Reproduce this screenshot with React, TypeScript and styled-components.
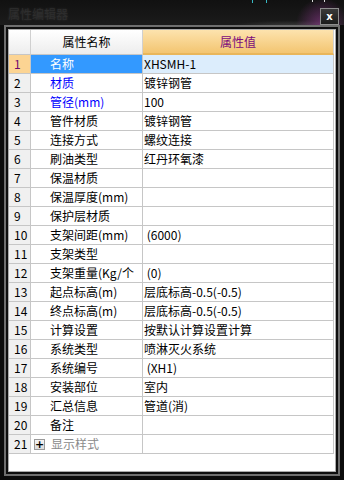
import React from "react";
import styled, { createGlobalStyle } from "styled-components";

const GlobalStyle = createGlobalStyle`
  html, body {
    margin: 0;
    padding: 0;
    background: #000;
  }
  body {
    font-family: "Noto Sans CJK SC", "Noto Sans", sans-serif;
    font-size: 12px;
  }
`;

const FONT = `"Noto Sans CJK SC", "Noto Sans", sans-serif`;
const GRID = "#c6c6c6";

const Window = styled.div`
  width: 344px;
  height: 480px;
  display: flex;
  flex-direction: column;
  background: #0c0c0c;
  box-sizing: border-box;
  overflow: hidden;
`;

const TitleBar = styled.div`
  height: 25px;
  flex: none;
  display: flex;
  justify-content: space-between;
  padding: 0 5px 0 8px;
  box-sizing: border-box;
  background:
    linear-gradient(#37b9c4, #37b9c4) 252px 0 / 1px 3px no-repeat,
    linear-gradient(#37b9c4, #37b9c4) 266px 0 / 1px 3px no-repeat,
    linear-gradient(#d8d8d8, #d8d8d8) 312px 0 / 1px 2px no-repeat,
    linear-gradient(#d8d8d8, #d8d8d8) 324px 0 / 1px 2px no-repeat,
    radial-gradient(circle at 322px 24px, rgba(190, 70, 190, 0.45), rgba(190, 70, 190, 0) 26px),
    radial-gradient(ellipse at 290px 26px, rgba(120, 120, 120, 0.35), rgba(0, 0, 0, 0) 60px),
    linear-gradient(#111, #1b1b1b);
`;

const Title = styled.span`
  align-self: center;
  margin-top: 1px;
  font-family: ${FONT};
  font-size: 12px;
  color: #2e2e2e;
  text-shadow: 0 0 3px rgba(255, 255, 255, 0.12);
`;

const CloseButton = styled.div`
  margin-top: 8px;
  width: 19px;
  height: 17px;
  box-sizing: border-box;
  border: 1px solid #8e8e8e;
  background: linear-gradient(#3a3a3a, #1c1c1c);
  display: flex;
  align-items: center;
  justify-content: center;
  color: #fff;
  font-family: "DejaVu Sans", sans-serif;
  font-weight: bold;
  font-size: 10px;
  line-height: 1;
`;

const Frame = styled.div`
  flex: 1;
  display: flex;
  margin: 0 4px 4px;
  border: 2px solid #6f6f6f;
  padding: 2px;
  background: #0e0e0e;
`;

const Client = styled.div`
  flex: 1;
  border: 1px solid #aaaaaa;
  background: #fff;
  overflow: hidden;
`;

const Table = styled.div`
  width: 325px;
  display: flex;
  flex-direction: column;
  font-family: ${FONT};
  font-size: 12px;
`;

const Row = styled.div<{ $head?: boolean }>`
  display: grid;
  grid-template-columns: 22px 112px 191px;
  height: ${(p) => (p.$head ? 25 : 19)}px;
`;

const Cell = styled.div`
  box-sizing: border-box;
  border-right: 1px solid ${GRID};
  border-bottom: 1px solid ${GRID};
  white-space: nowrap;
  overflow: hidden;
  display: flex;
  align-items: center;
  line-height: 18px;
`;

const HeadCell = styled(Cell)<{ $tone: "corner" | "name" | "value" }>`
  justify-content: center;
  border-right-color: #d0d0d0;
  color: ${(p) => (p.$tone === "value" ? "#7c0c7c" : "#000")};
  background: ${(p) =>
    p.$tone === "value"
      ? "linear-gradient(#fde3ae, #f3c571)"
      : "linear-gradient(#ffffff, #ededed)"};
  border-bottom: ${(p) => (p.$tone === "value" ? "2px solid #e9b65a" : `1px solid ${GRID}`)};
`;

const NumCell = styled(Cell)<{ $active?: boolean }>`
  padding-left: 5px;
  background: ${(p) => (p.$active ? "#fcd493" : "#f0f0f0")};
  color: ${(p) => (p.$active ? "#6e0a6e" : "#000")};
`;

const NameCell = styled(Cell)<{ $active?: boolean; $tone?: "blue" | "gray" }>`
  padding-left: ${(p) => (p.$tone === "gray" ? 3 : 19)}px;
  gap: 6px;
  background: ${(p) => (p.$active ? "#3399ff" : "#fff")};
  color: ${(p) =>
    p.$active ? "#fff" : p.$tone === "blue" ? "#0000ff" : p.$tone === "gray" ? "#8a8a8a" : "#000"};
`;

const ValueCell = styled(Cell)<{ $active?: boolean }>`
  padding-left: 1px;
  background: ${(p) => (p.$active ? "#dcedfc" : "#fff")};
  color: #000;
`;

const Expander = styled.span`
  width: 11px;
  height: 11px;
  box-sizing: border-box;
  border: 1px solid #9a9a9a;
  background: linear-gradient(#f4f4f4, #dcdcdc);
  display: flex;
  align-items: center;
  justify-content: center;
  color: #000;
  font-family: "DejaVu Sans", sans-serif;
  font-size: 11px;
  line-height: 1;
  font-weight: bold;
`;

type Prop = {
  name: string;
  value: string;
  tone?: "blue" | "gray";
  group?: boolean;
};

const props: Prop[] = [
  { name: "名称", value: "XHSMH-1" },
  { name: "材质", value: "镀锌钢管", tone: "blue" },
  { name: "管径(mm)", value: "100", tone: "blue" },
  { name: "管件材质", value: "镀锌钢管" },
  { name: "连接方式", value: "螺纹连接" },
  { name: "刷油类型", value: "红丹环氧漆" },
  { name: "保温材质", value: "" },
  { name: "保温厚度(mm)", value: "" },
  { name: "保护层材质", value: "" },
  { name: "支架间距(mm)", value: "\u00a0(6000)" },
  { name: "支架类型", value: "" },
  { name: "支架重量(Kg/个", value: "\u00a0(0)" },
  { name: "起点标高(m)", value: "层底标高-0.5(-0.5)" },
  { name: "终点标高(m)", value: "层底标高-0.5(-0.5)" },
  { name: "计算设置", value: "按默认计算设置计算" },
  { name: "系统类型", value: "喷淋灭火系统" },
  { name: "系统编号", value: "\u00a0(XH1)" },
  { name: "安装部位", value: "室内" },
  { name: "汇总信息", value: "管道(消)" },
  { name: "备注", value: "" },
  { name: "显示样式", value: "", tone: "gray", group: true },
];

export default function App() {
  return (
    <>
      <GlobalStyle />
      <Window>
        <TitleBar>
          <Title>属性编辑器</Title>
          <CloseButton>x</CloseButton>
        </TitleBar>
        <Frame>
          <Client>
            <Table>
              <Row $head>
                <HeadCell $tone="corner" />
                <HeadCell $tone="name">属性名称</HeadCell>
                <HeadCell $tone="value">属性值</HeadCell>
              </Row>
              {props.map((p, i) => {
                const active = i === 0;
                return (
                  <Row key={i}>
                    <NumCell $active={active}>{i + 1}</NumCell>
                    <NameCell $active={active} $tone={p.tone}>
                      {p.group && <Expander>+</Expander>}
                      {p.name}
                    </NameCell>
                    <ValueCell $active={active}>{p.value}</ValueCell>
                  </Row>
                );
              })}
            </Table>
          </Client>
        </Frame>
      </Window>
    </>
  );
}
